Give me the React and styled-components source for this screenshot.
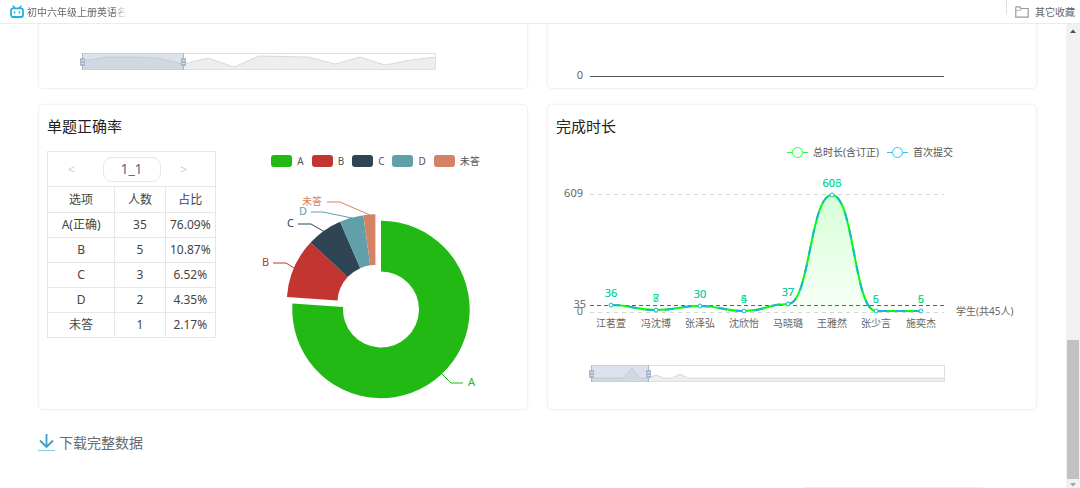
import React, { useState } from "react";
import styled, { createGlobalStyle } from "styled-components";

const answers = [
  { name: "A", label: "A(正确)", count: 35, rate: "76.09%", color: "#22b914" },
  { name: "B", label: "B", count: 5, rate: "10.87%", color: "#c23531" },
  { name: "C", label: "C", count: 3, rate: "6.52%", color: "#2f4554" },
  { name: "D", label: "D", count: 2, rate: "4.35%", color: "#61a0a8" },
  { name: "未答", label: "未答", count: 1, rate: "2.17%", color: "#d48265" },
];

const callouts = [
  { line: "226,202 235,211 247,211", x: 252, y: 214 },
  { line: "78,96 70,91 57,91", x: 46, y: 94 },
  { line: "109,60 95,52 82,52", x: 71, y: 55 },
  { line: "136,46 107,40 95,40", x: 83, y: 43 },
  { line: "154,43 124,30 111,30", x: 86, y: 33 },
];

const students = [
  { name: "江茗萱", total: 36, first: 36, x: 63, y: 140 },
  { name: "冯沈博", total: 8, first: 7, x: 108, y: 145 },
  { name: "张泽弘", total: 30, first: 30, x: 152, y: 141 },
  { name: "沈欣怡", total: 5, first: 4, x: 196, y: 146 },
  { name: "马晓璐", total: 37, first: 37, x: 240, y: 139 },
  { name: "王雅然", total: 606, first: 603, x: 284, y: 30 },
  { name: "张少言", total: 6, first: 5, x: 328, y: 146 },
  { name: "施奕杰", total: 6, first: 5, x: 373, y: 146 },
];

// ring slice between two fractions of the circle
const slicePath = (cx, cy, from, to) => {
  const point = (r, t) =>
    `${cx + r * Math.sin(t * 2 * Math.PI)} ${cy - r * Math.cos(t * 2 * Math.PI)}`;
  const large = to - from > 0.5 ? 1 : 0;
  return `M${point(88.7, from)} A88.7 88.7 0 ${large} 1 ${point(88.7, to)}
    L${point(38, to)} A38 38 0 ${large} 0 ${point(38, from)} Z`;
};

const smoothPath = (points) =>
  points
    .map((p, i) => {
      if (i === 0) return `M${p.x} ${p.y}`;
      const mid = (points[i - 1].x + p.x) / 2;
      return `C${mid} ${points[i - 1].y} ${mid} ${p.y} ${p.x} ${p.y}`;
    })
    .join(" ");

function DataZoom({ x, y, selected, line }) {
  return (
    <g transform={`translate(${x} ${y})`}>
      <polygon points={`0,16 ${line} 354,16`} fill="#2f4554" fillOpacity="0.09" />
      <polyline points={line} fill="none" stroke="#2f4554" strokeOpacity="0.16" />
      <rect x="0.5" y="0.5" width="353" height="16" fill="none" stroke="#e0e0e0" />
      <rect width={selected} height="17" fill="#a7b7cc" fillOpacity="0.4" />
      {[0.5, selected + 0.5].map((pos) => (
        <g key={pos}>
          <line x1={pos} x2={pos} y1="0" y2="17" stroke="#a7b7cc" />
          <rect x={pos - 2.5} y="5" width="5" height="8" rx="1" fill="#a7b7cc" />
          <path d={`M${pos - 1} 7.5h2.5M${pos - 1} 10.5h2.5`} stroke="#dbe2eb" />
        </g>
      ))}
    </g>
  );
}

function AnswerTable() {
  const [question] = useState("1_1");
  return (
    <Table>
      <colgroup>
        <Col $width="40%" />
        <Col $width="30%" />
        <Col $width="30%" />
      </colgroup>
      <thead>
        <tr>
          <PagerCell colSpan={3}>
            <Pager>
              <Arrow aria-label="上一题">&lt;</Arrow>
              <Current>{question}</Current>
              <Arrow aria-label="下一题">&gt;</Arrow>
            </Pager>
          </PagerCell>
        </tr>
        <tr>
          <HeadCell>选项</HeadCell>
          <HeadCell>人数</HeadCell>
          <HeadCell>占比</HeadCell>
        </tr>
      </thead>
      <tbody>
        {answers.map((item) => (
          <tr key={item.name}>
            <Cell>{item.label}</Cell>
            <Cell>{item.count}</Cell>
            <Cell>{item.rate}</Cell>
          </tr>
        ))}
      </tbody>
    </Table>
  );
}

function Donut() {
  const sum = answers.reduce((acc, item) => acc + item.count, 0);
  let used = 0;
  return (
    <Chart viewBox="0 0 311 230">
      {answers.map((item, i) => {
        const from = used / sum;
        used += item.count;
        // the right answer is pulled out of the ring
        const d = slicePath(i === 0 ? 165 : 159.4, i === 0 ? 137.5 : 131, from, used / sum);
        return (
          <g key={item.name}>
            <path d={d} fill={item.color} />
            <polyline points={callouts[i].line} fill="none" stroke={item.color} />
            <ChartText $size={i === 4 ? 10 : 11} x={callouts[i].x} y={callouts[i].y} fill={item.color}>
              {item.name}
            </ChartText>
          </g>
        );
      })}
    </Chart>
  );
}

function DurationChart() {
  const curve = smoothPath(students);
  return (
    <Chart viewBox="0 0 488 244">
      <defs>
        <linearGradient id="area" x1="0" y1="0" x2="0" y2="1">
          <stop offset="0" stopColor="#0f0" stopOpacity="0.16" />
          <stop offset="1" stopColor="#0f0" stopOpacity="0.03" />
        </linearGradient>
      </defs>
      <path d="M42 29.5H396M42 147.5H396" stroke="#d4d4d4" strokeDasharray="4 4" />
      <path d={`${curve} L373 147 L63 147 Z`} fill="url(#area)" />
      <path d="M42 140.5H396" stroke="#556570" strokeDasharray="4 3" />
      <path d={curve} fill="none" stroke="#0f0" strokeWidth="2" />
      <path d={curve} fill="none" stroke="#1cb5d4" strokeWidth="2" strokeDasharray="9 9" />
      <ChartText $size={11} x="35" y="32" fill="#666" textAnchor="end">609</ChartText>
      <ChartText $size={11} x="38" y="143" fill="#666f76" textAnchor="end">35</ChartText>
      <ChartText $size={11} x="35" y="150" fill="#777" textAnchor="end">0</ChartText>
      {students.map((s) => (
        <g key={s.name} textAnchor="middle">
          <circle cx={s.x} cy={s.y} r="2" fill="#fff" stroke="#1cb5d4" />
          <ChartText $size={11} x={s.x} y={s.y - 8} fill="#0f3">{s.total}</ChartText>
          <ChartText $size={11} x={s.x} y={s.y - 8} fill="#1cb5d4" fillOpacity="0.8">{s.first}</ChartText>
          <ChartText $size={10} x={s.x} y="162" fill="#666">{s.name}</ChartText>
        </g>
      ))}
      <ChartText $size={10} x="408" y="150" fill="#666">学生(共45人)</ChartText>
      <DataZoom
        x={43}
        y={200}
        selected={57}
        line="0,13 32,13 41,3 49,13 57,13 65,10 73,13 81,13 89,9 97,13 354,13"
      />
    </Chart>
  );
}

export default function App() {
  return (
    <Page>
      <GlobalStyle />
      <Bookmarks>
        <BookmarkLink href="#site">
          <svg width="14" height="14" viewBox="0 0 14 14" fill="none" stroke="#20b0e3" strokeLinecap="round">
            <path d="M3.2 1.2L4.8 3M10.8 1.2L9.2 3" strokeWidth="1.6" />
            <rect x="1" y="3.4" width="12" height="8.6" rx="2" strokeWidth="1.8" />
            <path d="M4.6 7v1M9.4 7v1" strokeWidth="1.5" />
          </svg>
          <FadedText>初中六年级上册英语名</FadedText>
        </BookmarkLink>
        <OtherBookmarks>
          <Divider />
          <BookmarkLink href="#others">
            <svg width="14" height="12" viewBox="0 0 14 12" fill="none" stroke="#999" strokeWidth="1.2">
              <path d="M0.8 11V1.4a0.6 0.6 0 0 1 0.6-0.6H4.6L6 2.5H13.2V11.2H0.8Z" />
              <path d="M1 4.5H4.8L6.2 2.8" stroke="#bbb" />
            </svg>
            <span>其它收藏</span>
          </BookmarkLink>
        </OtherBookmarks>
      </Bookmarks>
      <Body>
        <Main>
          <Grid>
            <Card $cut>
              <Chart viewBox="0 0 488 64">
                <DataZoom
                  x={43}
                  y={29}
                  selected={101}
                  line="0,8 25,4 51,4 76,5 101,11 126,5 152,14 177,3 227,4 253,11 278,4 303,12 329,7 354,4"
                />
              </Chart>
            </Card>
            <Card $cut>
              <Chart viewBox="0 0 488 64">
                <ChartText $size={11} x="35" y="55" fill="#666" textAnchor="end">0</ChartText>
                <path d="M42 52.5H396" stroke="#555" />
              </Chart>
            </Card>
            <Card>
              <Title>单题正确率</Title>
              <Row>
                <AnswerTable />
                <DonutSide>
                  <Legend $align="center">
                    {answers.map((item) => (
                      <LegendItem key={item.name}>
                        <Swatch $color={item.color} />
                        {item.name}
                      </LegendItem>
                    ))}
                  </Legend>
                  <Donut />
                </DonutSide>
              </Row>
            </Card>
            <Card>
              <Title>完成时长</Title>
              <Legend $align="flex-end">
                {[["总时长(含订正)", "#2f4"], ["首次提交", "#3cbfe0"]].map(([name, color]) => (
                  <LegendItem key={name}>
                    <svg width="21" height="12" viewBox="0 0 21 12" fill="#fff" stroke={color}>
                      <path d="M0 6.5H21" />
                      <circle cx="10.5" cy="6.5" r="5" />
                    </svg>
                    {name}
                  </LegendItem>
                ))}
              </Legend>
              <DurationChart />
            </Card>
          </Grid>
          <Download href="#download">
            <svg width="17" height="18" viewBox="0 0 17 18" fill="none" stroke="#3f9dc4" strokeWidth="1.8">
              <path d="M8.5 0V12.5M2 6.5L8.5 13L15 6.5" />
              <path d="M0 16.5H17" stroke="#7fd3ea" strokeWidth="1.2" />
            </svg>
            下载完整数据
          </Download>
          <NextBlock />
        </Main>
        <ScrollBar>
          <ScrollArrow viewBox="0 0 14 14"><path d="M4 9L7 5.5L10 9Z" fill="#505050" /></ScrollArrow>
          <Track>
            <Thumb />
          </Track>
          <ScrollArrow $short viewBox="0 0 14 9"><path d="M4 4L7 7.5L10 4Z" fill="#a3a3a3" /></ScrollArrow>
        </ScrollBar>
      </Body>
    </Page>
  );
}

const GlobalStyle = createGlobalStyle`
  * {
    box-sizing: border-box;
  }
  body {
    margin: 0;
    background: #fff;
    font-family: "Noto Sans", "Noto Sans CJK SC", sans-serif;
    color: #444;
  }
  button {
    font-family: inherit;
    background: none;
    cursor: pointer;
  }
  a {
    text-decoration: none;
    color: inherit;
  }
  svg {
    flex-shrink: 0;
  }
`;

const Page = styled.div`
  height: 100vh;
  display: flex;
  flex-direction: column;
  overflow: hidden;
`;

const Bookmarks = styled.header`
  display: flex;
  justify-content: space-between;
  height: 24px;
  flex-shrink: 0;
  padding: 0 5px 0 10px;
  border-bottom: 1px solid #ececec;
`;

const BookmarkLink = styled.a`
  display: flex;
  align-items: center;
  gap: 3px;
  height: 23px;
  font-size: 10px;
  line-height: 16px;
  color: #666;
  white-space: nowrap;
`;

const FadedText = styled.span`
  mask-image: linear-gradient(to right, #000 85%, transparent);
`;

const OtherBookmarks = styled.div`
  display: flex;
  gap: 8px;
  ${BookmarkLink} {
    gap: 6px;
  }
`;

const Divider = styled.span`
  width: 1px;
  height: 14px;
  background: #ddd;
`;

const Body = styled.div`
  flex: 1;
  min-height: 0;
  display: flex;
`;

const Main = styled.main`
  flex: 1;
  display: flex;
  flex-direction: column;
  padding: 0 29px 0 38px;
  overflow: hidden;
`;

const Grid = styled.div`
  display: grid;
  grid-template-columns: 1fr 1fr;
  gap: 15px 19px;
`;

const Card = styled.section`
  min-width: 0;
  border: 1px solid #f2f2f2;
  border-top-width: ${(p) => (p.$cut ? "0" : "1px")};
  border-radius: ${(p) => (p.$cut ? "0 0 5px 5px" : "5px")};
  box-shadow: 0 0 2px #f0f0f0;
`;

const Title = styled.h2`
  margin: 0;
  padding: 10px 8px 0;
  font-size: 15px;
  line-height: 22px;
  font-weight: 400;
  color: #222;
`;

const Row = styled.div`
  display: flex;
  align-items: flex-start;
  padding: 14px 0 0 8px;
`;

const Table = styled.table`
  width: 169px;
  flex-shrink: 0;
  table-layout: fixed;
  border-collapse: collapse;
  font-size: 12px;
  line-height: 16px;
  text-align: center;
`;

const Col = styled.col`
  width: ${(p) => p.$width};
`;

const Cell = styled.td`
  height: 25px;
  padding: 0;
  border: 1px solid #e6e6e6;
`;

const HeadCell = styled.th`
  height: 26px;
  padding: 0;
  border: 1px solid #e6e6e6;
  font-weight: 400;
`;

const PagerCell = styled.th`
  height: 35px;
  padding: 0;
  border: 1px solid #e6e6e6;
  font-weight: 400;
`;

const Pager = styled.div`
  display: flex;
  align-items: center;
  justify-content: center;
`;

const Arrow = styled.button`
  flex: 1;
  padding: 0 8px 0 0;
  border: 0;
  font-size: 12px;
  color: #ccc;
`;

const Current = styled.button`
  width: 58px;
  height: 25px;
  padding: 0;
  border: 1px solid #e6e6e6;
  border-radius: 9px;
  font-size: 14px;
  line-height: 20px;
  color: #666a72;
`;

const DonutSide = styled.div`
  flex: 1;
  min-width: 0;
`;

const Legend = styled.div`
  display: flex;
  justify-content: ${(p) => p.$align};
  gap: 8px;
  padding: ${(p) => (p.$align === "center" ? "2px 0 3px 8px" : "7px 83px 5px 0")};
`;

const LegendItem = styled.button`
  display: flex;
  align-items: center;
  gap: 5px;
  padding: 0;
  border: 0;
  font-size: 10px;
  line-height: 16px;
  color: #555;
  white-space: nowrap;
`;

const Swatch = styled.span`
  width: 21px;
  height: 12px;
  border-radius: 3px;
  background: ${(p) => p.$color};
`;

const Chart = styled.svg`
  display: block;
  width: 100%;
`;

const ChartText = styled.text`
  font-size: ${(p) => p.$size}px;
`;

const Download = styled.a`
  display: flex;
  align-items: center;
  align-self: flex-start;
  gap: 4px;
  margin-top: 22px;
  font-size: 14px;
  line-height: 22px;
  color: #666a72;
`;

const NextBlock = styled.div`
  width: 18%;
  height: 1px;
  margin: auto 54px 0 auto;
  background: #eee;
`;

const ScrollBar = styled.div`
  width: 14px;
  display: flex;
  flex-direction: column;
  background: #f1f1f1;
`;

const ScrollArrow = styled.svg`
  width: 14px;
  height: ${(p) => (p.$short ? "9px" : "14px")};
`;

const Track = styled.div`
  flex: 1;
  display: flex;
  flex-direction: column;
  justify-content: flex-end;
`;

const Thumb = styled.div`
  height: 139px;
  margin: 0 1px;
  background: #c1c1c1;
`;
